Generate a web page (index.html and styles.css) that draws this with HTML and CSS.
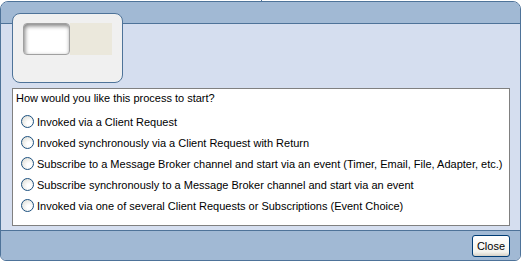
FILE: index.html
```html
<!DOCTYPE html>
<html lang="en">
<head>
  <meta charset="UTF-8">
  <title>Start Process</title>
  <link rel="stylesheet" href="styles.css">
</head>
<body>
  <div class="splitter"></div>
  <div class="dialog">
    <div class="title-bar"></div>
    <div class="main">
      <div class="preview">
        <div class="preview-box"></div>
        <div class="preview-swatch"></div>
      </div>
      <div class="options">
        <div class="question">How would you like this process to start?</div>
        <label class="option"><span class="radio"></span>Invoked via a Client Request</label>
        <label class="option"><span class="radio"></span>Invoked synchronously via a Client Request with Return</label>
        <label class="option"><span class="radio"></span>Subscribe to a Message Broker channel and start via an event (Timer, Email, File, Adapter, etc.)</label>
        <label class="option"><span class="radio"></span>Subscribe synchronously to a Message Broker channel and start via an event</label>
        <label class="option"><span class="radio"></span>Invoked via one of several Client Requests or Subscriptions (Event Choice)</label>
      </div>
    </div>
    <div class="button-bar">
      <button class="close-btn">Close</button>
    </div>
  </div>
</body>
</html>
```

FILE: styles.css
```css
body {
  margin: 0;
  background-color: white;
  font-family: "Liberation Sans", Arial, sans-serif;
  font-size: 11px;
  color: black;
}
.splitter {
  width: 1px;
  height: 1px;
  margin-left: 261px;
  background-color: #4e7399;
}
.dialog {
  width: 519px;
  height: 258px;
  border: 1px solid #4e7399;
  border-radius: 8px 8px 6px 6px;
  background-color: #d5deef;
  display: flex;
  flex-direction: column;
  overflow: hidden;
}
.title-bar {
  height: 21px;
  background-color: #a1b9d4;
  border-bottom: 1px solid #4e7399;
}
.main {
  flex: 1;
  padding: 0 10px 4px 11px;
  display: flex;
  flex-direction: column;
}
.preview {
  width: 89px;
  height: 59px;
  margin-top: -11px;
  padding: 9px 10px 0 10px;
  background-color: #f0f0f0;
  border: 1px solid #4e7399;
  border-radius: 8px;
  display: flex;
  align-items: flex-start;
}
.preview-box {
  width: 46px;
  height: 30px;
  background-color: white;
  border: 1px solid #a0a0a0;
  border-radius: 4px;
  box-shadow: inset 1px 2px 4px #7c7c7c;
}
.preview-swatch {
  width: 42px;
  height: 32px;
  background-color: #ebe8dc;
}
.options {
  flex: 1;
  margin-top: 5px;
  background-color: white;
  border: 1px solid #808080;
  padding: 1px 3px 0 3px;
}
.question {
  height: 17px;
  line-height: 17px;
  margin-bottom: 4px;
}
.option {
  display: flex;
  align-items: center;
  height: 21px;
  padding-left: 5px;
}
.radio {
  width: 11px;
  height: 11px;
  border: 1px solid #1c5180;
  border-radius: 50%;
  margin-right: 3px;
  background: radial-gradient(circle at 65% 65%, #ffffff 20%, #e4e4de 75%, #d0d0c8 100%);
}
.button-bar {
  height: 29px;
  background-color: #a1b9d4;
  border-top: 1px solid #4e7399;
  display: flex;
  justify-content: flex-end;
  align-items: center;
  padding-right: 10px;
}
.close-btn {
  font-family: "Liberation Sans", Arial, sans-serif;
  font-size: 11px;
  height: 22px;
  padding: 0 4px;
  border: 1px solid #003c74;
  border-radius: 3px;
  background: linear-gradient(#ffffff, #f3f3ee 80%, #d6d0c5);
  color: black;
}
```
